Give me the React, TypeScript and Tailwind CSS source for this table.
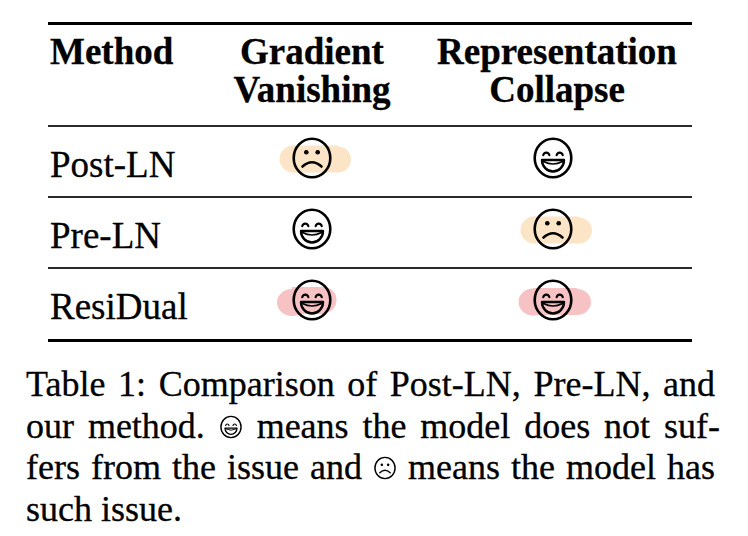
import React from "react";

type Mood = "happy" | "sad";
type Tint = "orange" | "pink-a" | "pink-b" | "none";

const serif = { fontFamily: '"Liberation Serif", "Times New Roman", serif' };

// face drawn in a 40x42 box, centre (20,21)
function FacePaths({ mood }: { mood: Mood }) {
  return (
    <g fill="none" stroke="#000" strokeLinecap="round" strokeLinejoin="round">
      <ellipse cx="20" cy="21" rx="18.3" ry="19.3" strokeWidth="2.6" />
      {mood === "happy" ? (
        <>
          <path d="M10.2 18.3 A3.2 3.6 0 0 1 16.4 18.3" strokeWidth="2.1" />
          <path d="M23.6 18.3 A3.2 3.6 0 0 1 29.8 18.3" strokeWidth="2.1" />
          <path d="M9 23 H31 A11 11.5 0 0 1 9 23 Z" strokeWidth="2.4" />
          <path d="M10.5 24.5 Q20 29.5 29.5 24.5" strokeWidth="1.7" />
        </>
      ) : (
        <>
          <circle cx="14.3" cy="15.3" r="2.3" fill="#000" stroke="none" />
          <circle cx="25.7" cy="15.3" r="2.3" fill="#000" stroke="none" />
          <path d="M10.5 29.5 Q20 21 29.5 29.5" strokeWidth="2.6" />
        </>
      )}
    </g>
  );
}

// highlight blobs, in an 80x44 box with the face centred at (40,22)
function Blob({ tint }: { tint: Tint }) {
  if (tint === "orange") {
    return (
      <g fill="#fce5c6">
        <ellipse cx="21" cy="23" rx="13.5" ry="13.5" />
        <ellipse cx="66" cy="23.5" rx="13" ry="13" />
        <rect x="21" y="9.5" width="45" height="27" />
      </g>
    );
  }
  if (tint === "pink-a") {
    return (
      <g fill="#f6c2c4">
        <ellipse cx="20" cy="24.5" rx="15" ry="13.5" />
        <ellipse cx="52" cy="22" rx="12.5" ry="13" />
        <rect x="20" y="9" width="32" height="27" />
      </g>
    );
  }
  if (tint === "pink-b") {
    return (
      <g fill="#f6c2c4">
        <ellipse cx="20" cy="24" rx="14.5" ry="13.5" />
        <ellipse cx="64" cy="24" rx="14" ry="13" />
        <rect x="20" y="10" width="44" height="27" />
      </g>
    );
  }
  return null;
}

function Mark({ mood, tint = "none" }: { mood: Mood; tint?: Tint }) {
  return (
    <svg width="80" height="44" viewBox="0 0 80 44" className="block">
      <Blob tint={tint} />
      <g transform="translate(20 1)">
        <FacePaths mood={mood} />
      </g>
    </svg>
  );
}

function InlineFace({ mood }: { mood: Mood }) {
  return (
    <svg
      width="22"
      height="24"
      viewBox="0 0 40 42"
      className="inline-block align-[-1px] mx-[1px]"
    >
      <FacePaths mood={mood} />
    </svg>
  );
}

interface Row {
  method: string;
  gradient: { mood: Mood; tint?: Tint };
  collapse: { mood: Mood; tint?: Tint };
}

const rows: Row[] = [
  { method: "Post-LN", gradient: { mood: "sad", tint: "orange" }, collapse: { mood: "happy" } },
  { method: "Pre-LN", gradient: { mood: "happy" }, collapse: { mood: "sad", tint: "orange" } },
  {
    method: "ResiDual",
    gradient: { mood: "happy", tint: "pink-a" },
    collapse: { mood: "happy", tint: "pink-b" },
  },
];

const cols = "grid grid-cols-[154px_220px_270px]";

export default function App() {
  return (
    <div
      className="w-[748px] h-[536px] bg-white text-black overflow-hidden [-webkit-text-stroke:0.3px_#000]"
      style={serif}
    >
      {/* Table */}
      <div className="ml-[48px] w-[644px] pt-[22px]">
        <div className="h-[3px] bg-black" />
        <div className={`${cols} h-[100px] pt-[7.5px] text-[37px] leading-[38px] font-bold`}>
          <div className="pl-[2px]">Method</div>
          <div className="text-center">
            Gradient
            <br />
            Vanishing
          </div>
          <div className="text-center">
            Representation
            <br />
            Collapse
          </div>
        </div>
        {rows.map((row, i) => (
          <div key={row.method}>
            <div className="h-[2px] bg-[#2a2a2a]" />
            <div className={`${cols} ${i === 2 ? "h-[70px]" : "h-[69px]"}`}>
              <div className="pl-[2px] pt-[19px] text-[37px] leading-[37px]">{row.method}</div>
              <div className="flex justify-center pt-[8.5px]">
                <Mark mood={row.gradient.mood} tint={row.gradient.tint} />
              </div>
              <div className="flex justify-center pr-[8px] pt-[8.5px]">
                <Mark mood={row.collapse.mood} tint={row.collapse.tint} />
              </div>
            </div>
          </div>
        ))}
        <div className="h-[3px] bg-black" />
      </div>

      {/* Caption */}
      <div className="ml-[26px] w-[689px] mt-[22px] text-[36px] leading-[41.5px]">
        <div className="text-justify [text-align-last:justify]">
          Table 1: Comparison of Post-LN, Pre-LN, and
        </div>
        <div className="text-justify [text-align-last:justify] mr-[-5px]">
          our method. <InlineFace mood="happy" /> means the model does not suf-
        </div>
        <div className="text-justify [text-align-last:justify]">
          fers from the issue and <InlineFace mood="sad" /> means the model has
        </div>
        <div>such issue.</div>
      </div>
    </div>
  );
}
